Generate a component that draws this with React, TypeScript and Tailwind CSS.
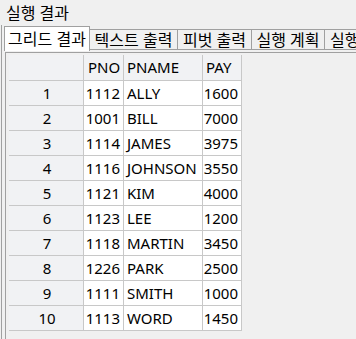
import React from "react";

const rows: [string, string, string, string][] = [
  ["1", "1112", "ALLY", "1600"],
  ["2", "1001", "BILL", "7000"],
  ["3", "1114", "JAMES", "3975"],
  ["4", "1116", "JOHNSON", "3550"],
  ["5", "1121", "KIM", "4000"],
  ["6", "1123", "LEE", "1200"],
  ["7", "1118", "MARTIN", "3450"],
  ["8", "1226", "PARK", "2500"],
  ["9", "1111", "SMITH", "1000"],
  ["10", "1113", "WORD", "1450"],
];

export default function App() {
  return (
    <div className="w-[356px] h-[339px] bg-[#f0f0f0] overflow-hidden font-['Noto_Sans','Noto_Sans_CJK_KR',sans-serif] text-[15px] text-black">
      <div className="h-[25px] pl-[6px] flex items-center leading-none text-[16px] pt-[1px]">실행 결과</div>
      <div className="ml-[1px] border-l border-[#a0a0a0] h-[314px] flex flex-col">
        <div className="h-[27px] pl-[2px] flex items-start whitespace-nowrap leading-none text-[16px]">
          <div className="mt-[1px] w-[86px] shrink-0 h-[25px] bg-white border-t border-l border-r border-[#a0a0a0] flex items-center justify-center pb-[1px]">
            그리드 결과
          </div>
          <div className="mt-[4px] w-[88px] shrink-0 h-[21px] border-t border-r border-b border-[#a0a0a0] flex items-center justify-center">
            텍스트 출력
          </div>
          <div className="mt-[4px] w-[74px] shrink-0 h-[21px] border-t border-r border-b border-[#a0a0a0] flex items-center justify-center">
            피벗 출력
          </div>
          <div className="mt-[4px] w-[73px] shrink-0 h-[21px] border-t border-r border-b border-[#a0a0a0] flex items-center justify-center">
            실행 계획
          </div>
          <div className="mt-[4px] w-[80px] shrink-0 h-[21px] border-t border-r border-b border-[#a0a0a0] flex items-center pl-[5px]">
            실행 결과
          </div>
        </div>
        <div className="flex-1 ml-[3px] border-l border-t border-[#a0a0a0] pl-[3px] pt-[2px]">
          <div className="grid grid-cols-[75px_40px_79px_39px] w-[233px] leading-none">
            <div className="h-[26px] bg-[#f1f2f4] border-r border-b border-[#c8c8c8]" />
            <div className="h-[26px] bg-[#f1f2f4] border-r border-b border-[#c8c8c8] flex items-center pl-[4px]">PNO</div>
            <div className="h-[26px] bg-[#f1f2f4] border-r border-b border-[#c8c8c8] flex items-center pl-[3px]">PNAME</div>
            <div className="h-[26px] bg-[#f1f2f4] border-r border-b border-[#c8c8c8] flex items-center pl-[3px]">PAY</div>
            {rows.map((r) => (
              <React.Fragment key={r[0]}>
                <div className="h-[25px] bg-[#f1f2f4] border-r border-b border-[#c8c8c8] flex items-center justify-center pl-[2px]">{r[0]}</div>
                <div className="h-[25px] bg-white border-r border-b border-[#c8c8c8] flex items-center justify-end pr-[3px]">{r[1]}</div>
                <div className="h-[25px] bg-white border-r border-b border-[#c8c8c8] flex items-center pl-[3px]">{r[2]}</div>
                <div className="h-[25px] bg-white border-r border-b border-[#c8c8c8] flex items-center justify-end pr-[3px]">{r[3]}</div>
              </React.Fragment>
            ))}
          </div>
        </div>
      </div>
    </div>
  );
}
